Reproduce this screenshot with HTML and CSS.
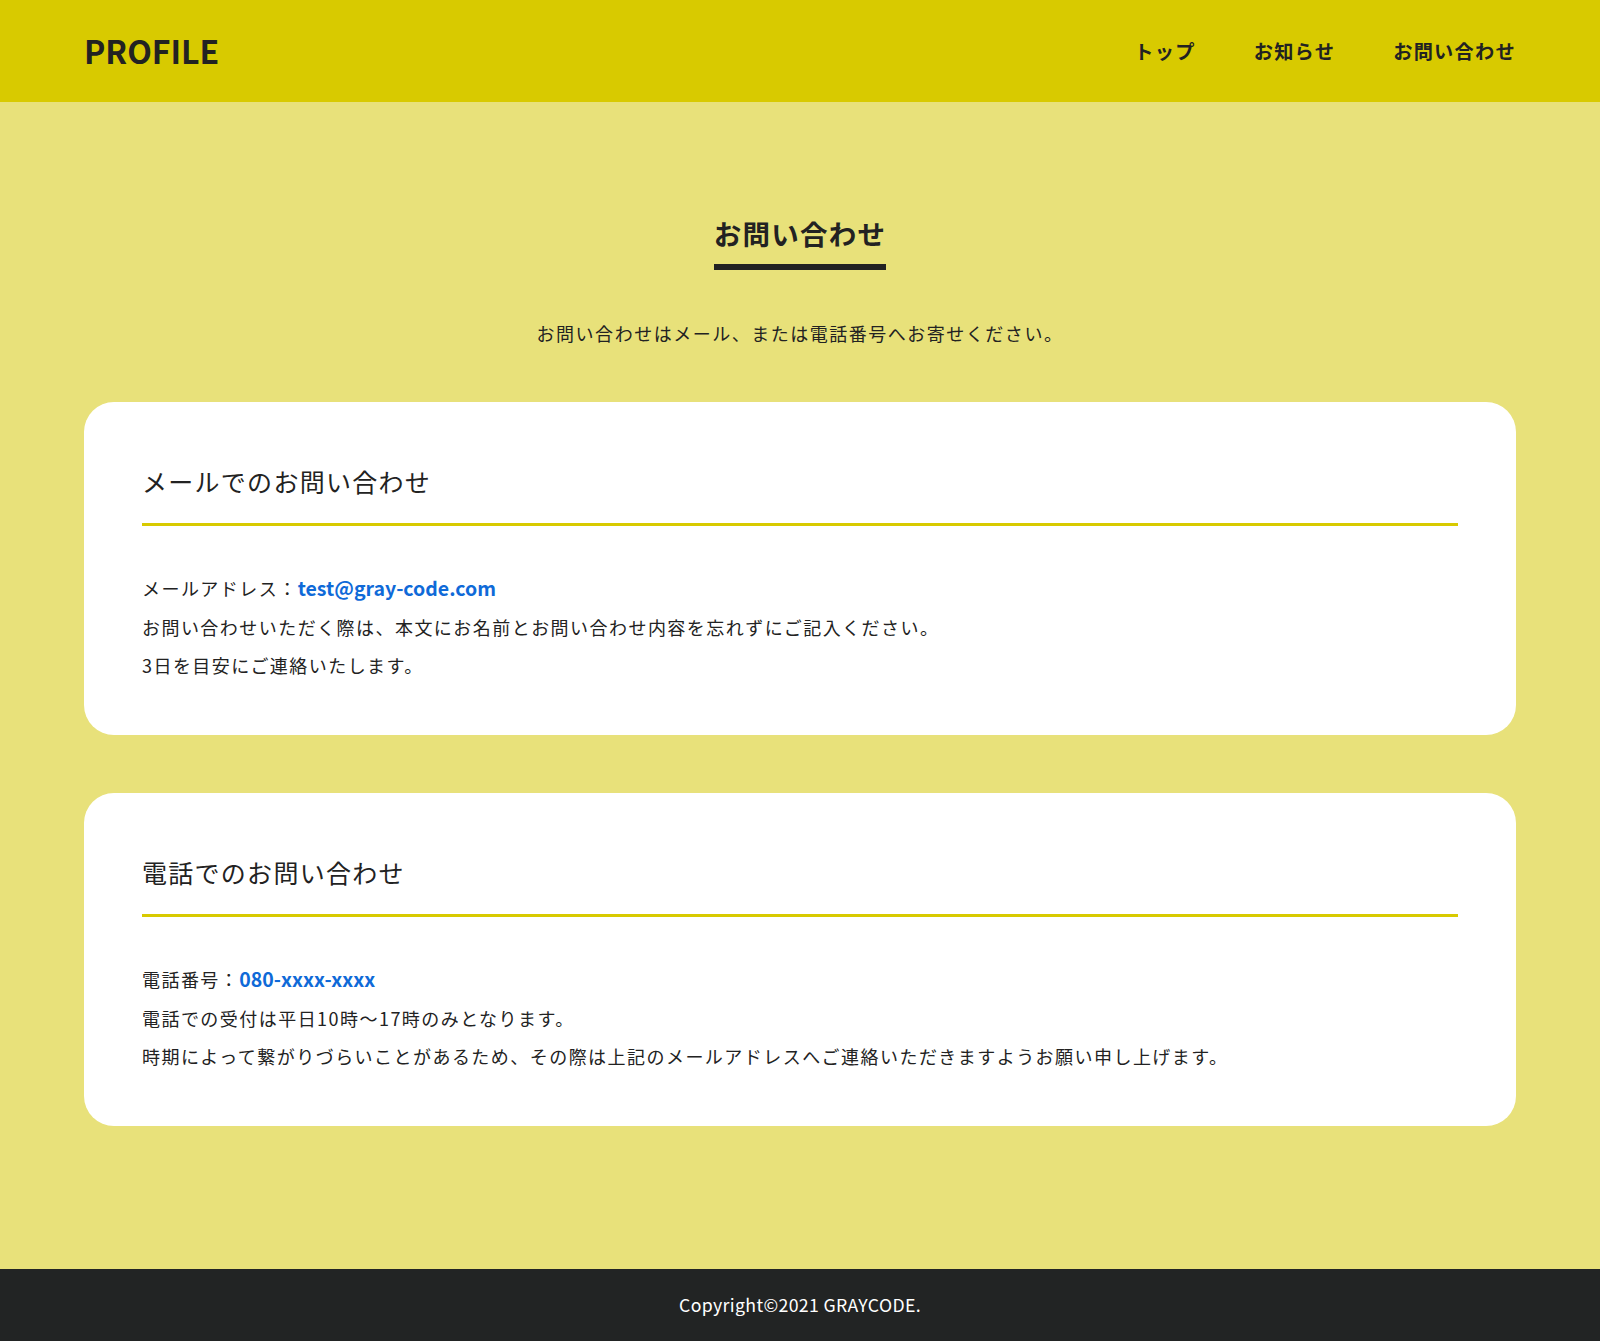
FILE: index.html
```html
<!DOCTYPE html>
<html lang="ja">
<head>
<meta charset="UTF-8">
<title>お問い合わせ | PROFILE</title>
<link rel="stylesheet" href="styles.css">
</head>
<body>
<header class="site-header">
  <h1 class="logo">PROFILE</h1>
  <nav class="global-nav">
    <ul class="nav-list">
      <li class="nav-item"><a class="nav-link" href="#">トップ</a></li>
      <li class="nav-item"><a class="nav-link" href="#">お知らせ</a></li>
      <li class="nav-item"><a class="nav-link" href="#">お問い合わせ</a></li>
    </ul>
  </nav>
</header>
<main class="main">
  <div class="page-head">
    <h2 class="page-title">お問い合わせ</h2>
    <p class="page-lead">お問い合わせはメール、または電話番号へお寄せください。</p>
  </div>
  <section class="card">
    <h3 class="card-title">メールでのお問い合わせ</h3>
    <div class="card-body">
      <p class="card-text">メールアドレス：<a class="card-link" href="#">test@gray-code.com</a></p>
      <p class="card-text">お問い合わせいただく際は、本文にお名前とお問い合わせ内容を忘れずにご記入ください。</p>
      <p class="card-text">3日を目安にご連絡いたします。</p>
    </div>
  </section>
  <section class="card">
    <h3 class="card-title">電話でのお問い合わせ</h3>
    <div class="card-body">
      <p class="card-text">電話番号：<a class="card-link" href="#">080-xxxx-xxxx</a></p>
      <p class="card-text">電話での受付は平日10時〜17時のみとなります。</p>
      <p class="card-text">時期によって繋がりづらいことがあるため、その際は上記のメールアドレスへご連絡いただきますようお願い申し上げます。</p>
    </div>
  </section>
</main>
<footer class="site-footer">
  <p class="copyright">Copyright©2021 GRAYCODE.</p>
</footer>
</body>
</html>
```
FILE: styles.css
```css
* {
  box-sizing: border-box;
}

html, body {
  margin: 0;
  padding: 0;
}

body {
  font-family: "Noto Sans CJK JP", "Noto Sans", sans-serif;
  color: #222222;
  background: #e8e17a;
  letter-spacing: 0.08em;
}

p, h1, h2, h3, ul {
  margin: 0;
  padding: 0;
}

.site-header {
  height: 102px;
  background: #d8ca00;
  display: flex;
  align-items: center;
  justify-content: space-between;
  padding: 0 84px;
}

.logo {
  font-size: 32px;
  font-weight: 700;
  letter-spacing: 0;
  line-height: 1;
  color: #222222;
  margin-top: -2px;
}

.nav-list {
  list-style: none;
  display: flex;
  gap: 58px;
}

.nav-link {
  font-size: 19.2px;
  font-weight: 700;
  color: #222222;
  text-decoration: none;
  line-height: 1.5;
}

.main {
  padding: 110.5px 84px 143px;
}

.page-head {
  display: flex;
  flex-direction: column;
  align-items: center;
}

.page-title {
  font-size: 27.5px;
  font-weight: 700;
  line-height: 1.5;
  padding-bottom: 10px;
  border-bottom: 6px solid #222222;
}

.page-lead {
  margin-top: 47px;
  font-size: 18px;
  line-height: 32px;
  letter-spacing: 0.084em;
}

.card {
  margin-top: 53px;
  background: #ffffff;
  border-radius: 30px;
  padding: 61px 58px 50px;
}

.card + .card {
  margin-top: 58px;
}

.card-title {
  font-size: 25px;
  font-weight: 400;
  line-height: 1.5;
  padding-bottom: 23px;
  border-bottom: 3px solid #d8ca00;
}

.card-body {
  padding-top: 43px;
}

.card-text {
  font-size: 18px;
  line-height: 38.5px;
  letter-spacing: 0.081em;
}

.card-link {
  font-size: 19.5px;
  font-weight: 700;
  letter-spacing: 0;
  color: #0f6ad8;
  text-decoration: none;
}

.site-footer {
  height: 72px;
  background: #222424;
  display: flex;
  align-items: center;
  justify-content: center;
}

.copyright {
  color: #ffffff;
  font-size: 17.7px;
  letter-spacing: 0.02em;
  margin-top: -2px;
}
```
